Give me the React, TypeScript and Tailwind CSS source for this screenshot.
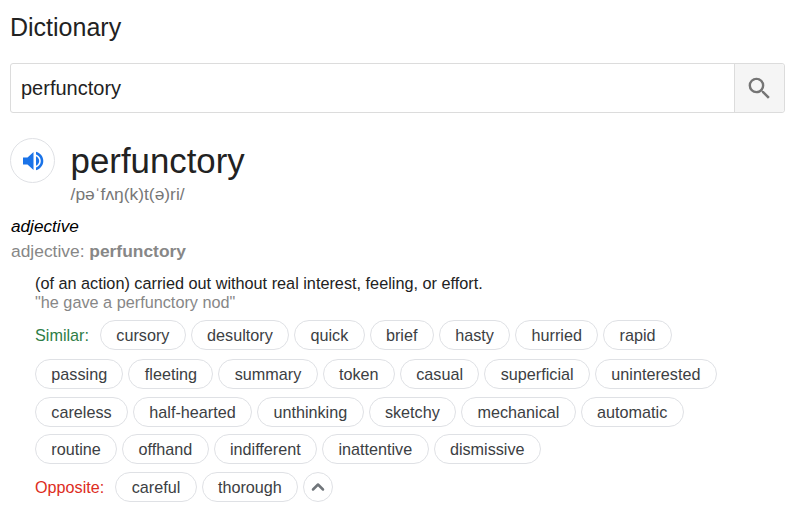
import { ChevronUp } from 'lucide-react';

const rows = [
  { label: 'Similar:', color: 'text-[#2e7d46]', words: ['cursory', 'desultory', 'quick', 'brief', 'hasty', 'hurried', 'rapid'], mt: 'mt-[8px]' },
  { label: '', color: '', words: ['passing', 'fleeting', 'summary', 'token', 'casual', 'superficial', 'uninterested'], mt: 'mt-[9px]' },
  { label: '', color: '', words: ['careless', 'half-hearted', 'unthinking', 'sketchy', 'mechanical', 'automatic'], mt: 'mt-[8px]' },
  { label: '', color: '', words: ['routine', 'offhand', 'indifferent', 'inattentive', 'dismissive'], mt: 'mt-[7px]' },
  { label: 'Opposite:', color: 'text-[#dd2c22]', words: ['careful', 'thorough'], mt: 'mt-[8px]' },
];

function Chip({ word }: { word: string }) {
  return (
    <span className="h-[30px] px-[15.35px] flex items-center rounded-full border border-[#dfe1e5] text-[#3c4043] bg-white whitespace-nowrap">
      {word}
    </span>
  );
}

export default function App() {
  return (
    <div className="w-[795px] h-[515px] overflow-hidden bg-white pl-[10px] pr-[10px] text-[16.2px] text-[#222] font-['Liberation_Sans',Arial,sans-serif]">
      <h1 className="pt-[12px] text-[25px] leading-[30px] font-normal">Dictionary</h1>

      {/* Search box */}
      <div className="mt-[21px] h-[50px] flex rounded-[3px] border border-[#dcdcdc]">
        <div className="flex-1 flex items-center pl-[10px] text-[20px]">perfunctory</div>
        <button className="w-[50px] flex items-center justify-center bg-[#f5f5f5] border-l border-[#dcdcdc] rounded-r-[3px]">
          <svg width="29" height="29" viewBox="0 0 24 24" fill="#757575">
            <path d="M15.500 14h-.79l-.28-.27A6.471 6.471 0 0 0 16 9.500 6.500 6.500 0 1 0 9.500 16c1.610 0 3.090-.59 4.230-1.570l.27.28v.79l5 4.990L20.490 19l-4.990-5zm-6 0C7.010 14 5 11.990 5 9.500S7.010 5 9.500 5 14 7.010 14 9.500 11.990 14 9.500 14z" />
          </svg>
        </button>
      </div>

      {/* Headword */}
      <div className="mt-[25px] flex">
        <button className="w-[45px] h-[45px] rounded-full border border-[#dfe1e5] flex items-center justify-center shrink-0">
          <svg width="24" height="24" viewBox="0 0 24 24" fill="#1a73e8">
            <path d="M2 8.500v7h4.500l6 5.500V3L6.500 8.500z" />
            <path d="M15 7.200v9.600c1.900-.9 3.200-2.700 3.200-4.800S16.900 8.100 15 7.200z" />
            <path d="M15 2.800v2.700c2.800 1 4.800 3.500 4.800 6.500s-2 5.500-4.800 6.500v2.700c4.200-1.100 7.300-4.700 7.300-9.200S19.200 3.900 15 2.800z" />
          </svg>
        </button>
        <div className="ml-[15.6px]">
          <div className="text-[34.8px] leading-[46px]">perfunctory</div>
          <div className="leading-[20px] text-[17.4px] text-[#777]">/pəˈfʌŋ(k)t(ə)ri/</div>
        </div>
      </div>

      <div className="mt-[12px] ml-px italic text-[17.2px] leading-[20px] text-black">adjective</div>
      <div className="mt-[5px] ml-px text-[17.4px] leading-[20px] text-[#878787]">
        adjective: <b className="font-bold">perfunctory</b>
      </div>

      {/* Definition */}
      <div className="pl-[25px] mt-[13px]">
        <div className="leading-[19px] text-[16.25px]">(of an action) carried out without real interest, feeling, or effort.</div>
        <div className="leading-[19px] text-[16.25px] text-[#878787]">"he gave a perfunctory nod"</div>

        {rows.map((row, i) => (
          <div key={i} className={`flex items-center gap-[5px] ${row.mt}`}>
            {row.label && <span className={`${row.color} mr-[6px]`}>{row.label}</span>}
            {row.words.map((w) => (
              <Chip key={w} word={w} />
            ))}
            {row.label === 'Opposite:' && (
              <span className="w-[30px] h-[30px] rounded-full border border-[#dfe1e5] flex items-center justify-center">
                <ChevronUp size={20} strokeWidth={3} className="text-[#70757a]" />
              </span>
            )}
          </div>
        ))}
      </div>
    </div>
  );
}
